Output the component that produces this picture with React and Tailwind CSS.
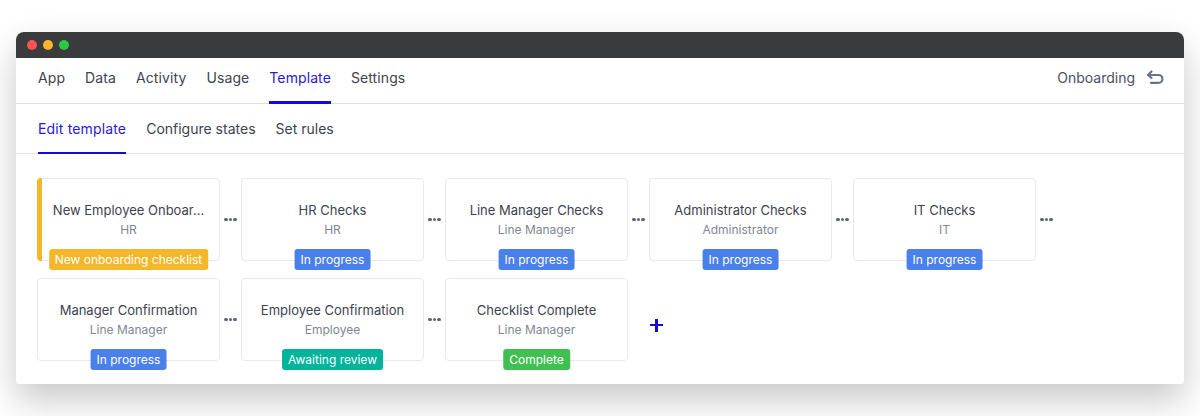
const navItems = ["App", "Data", "Activity", "Usage", "Template", "Settings"];
const tabs = ["Edit template", "Configure states", "Set rules"];

const blue = "bg-[#4a80ea]";
const rows = [
  [
    { title: "New Employee Onboar...", role: "HR", status: "New onboarding checklist", color: "bg-[#f4b72a]", first: true },
    { title: "HR Checks", role: "HR", status: "In progress", color: blue },
    { title: "Line Manager Checks", role: "Line Manager", status: "In progress", color: blue },
    { title: "Administrator Checks", role: "Administrator", status: "In progress", color: blue },
    { title: "IT Checks", role: "IT", status: "In progress", color: blue },
  ],
  [
    { title: "Manager Confirmation", role: "Line Manager", status: "In progress", color: blue },
    { title: "Employee Confirmation", role: "Employee", status: "Awaiting review", color: "bg-[#00b39b]" },
    { title: "Checklist Complete", role: "Line Manager", status: "Complete", color: "bg-[#41c052]", last: true },
  ],
];

function Dots() {
  return (
    <div className="w-[21px] flex justify-center gap-[1px]">
      <span className="w-[3.5px] h-[3.5px] rounded-full bg-[#5b6478]" />
      <span className="w-[3.5px] h-[3.5px] rounded-full bg-[#5b6478]" />
      <span className="w-[3.5px] h-[3.5px] rounded-full bg-[#5b6478]" />
    </div>
  );
}

function Card({ card }) {
  return (
    <div className="relative w-[183px] h-[83px] bg-white border border-[#e8e9ec] rounded-[4px] flex flex-col items-center pt-[22px]">
      {card.first && <span className="absolute -left-[1px] -top-[1px] -bottom-[1px] w-[5px] bg-[#f4b72a] rounded-l-[4px]" />}
      <div className="text-[13px] leading-[18px] text-[#3d4250] whitespace-nowrap">{card.title}</div>
      <div className="text-[12px] leading-[16px] mt-[3px] text-[#7f8694]">{card.role}</div>
      <div
        className={`absolute top-[70px] left-1/2 -translate-x-1/2 h-[21px] rounded-[3px] text-[12px] leading-[21px] text-white whitespace-nowrap ${card.color} ${
          card.first ? "px-[6px]" : "px-[6.5px]"
        }`}
      >
        {card.status}
      </div>
    </div>
  );
}

export default function App() {
  return (
    <div className="h-[416px] bg-white pt-[32px] px-[16px] overflow-hidden font-['Inter',sans-serif]">
      <div className="h-[352px] bg-white rounded-t-[8px] rounded-b-[4px] shadow-[0_16px_36px_rgba(0,0,0,0.22)]">
        {/* window bar */}
        <div className="h-[26px] bg-[#3a3b3d] rounded-t-[8px] flex items-center gap-[6px] pl-[11px]">
          <span className="w-[10px] h-[10px] rounded-full bg-[#fb5252]" />
          <span className="w-[10px] h-[10px] rounded-full bg-[#fdb42a]" />
          <span className="w-[10px] h-[10px] rounded-full bg-[#2ac840]" />
        </div>

        {/* top nav */}
        <div className="h-[46px] border-b border-[#dfe1e6] flex justify-between pl-[22px] pr-[20px]">
          <div className="flex gap-[20px]">
            {navItems.map((item) => (
              <div
                key={item}
                className={`h-[46px] pt-[10px] text-[14px] tracking-[0.1px] leading-[20px] ${
                  item === "Template" ? "text-[#2a18d8] border-b-[3px] border-[#1208e0]" : "text-[#3d4250]"
                }`}
              >
                {item}
              </div>
            ))}
          </div>
          <div className="flex items-start gap-[11px] pt-[10px]">
            <span className="text-[14px] leading-[20px] text-[#4a5060]">Onboarding</span>
            <svg width="18" height="18" viewBox="0 0 18 18" fill="none" stroke="#64748b" strokeWidth="2.2" strokeLinecap="round" strokeLinejoin="round" className="mt-[1px]">
              <path d="M5.5 2.5 2 6l3.5 3" />
              <path d="M2.5 6h10a3.9 3.9 0 0 1 0 7.8H5" />
            </svg>
          </div>
        </div>

        {/* sub tabs */}
        <div className="h-[50px] border-b border-[#dfe1e6] flex gap-[20px] pl-[22px]">
          {tabs.map((tab) => (
            <div
              key={tab}
              className={`h-[50px] pt-[15px] text-[14px] leading-[20px] ${
                tab === "Edit template" ? "tracking-[0.15px] text-[#2a18d8] border-b-2 border-[#1208e0]" : "text-[#3d4250]"
              }`}
            >
              {tab}
            </div>
          ))}
        </div>

        {/* state cards */}
        <div className="flex flex-col gap-[17px] pt-[24px] pl-[21px]">
          {rows.map((row, i) => (
            <div key={i} className="flex items-center">
              {row.map((card) => (
                <div key={card.title} className="flex items-center">
                  <Card card={card} />
                  {card.last ? (
                    <span className="ml-[22px] mt-[11px] relative w-[13px] h-[13px]">
                      <span className="absolute left-0 top-[5.25px] w-[13px] h-[2.5px] bg-[#1208e0]" />
                      <span className="absolute left-[5.25px] top-0 w-[2.5px] h-[13px] bg-[#1208e0]" />
                    </span>
                  ) : (
                    <Dots />
                  )}
                </div>
              ))}
            </div>
          ))}
        </div>
      </div>
    </div>
  );
}
